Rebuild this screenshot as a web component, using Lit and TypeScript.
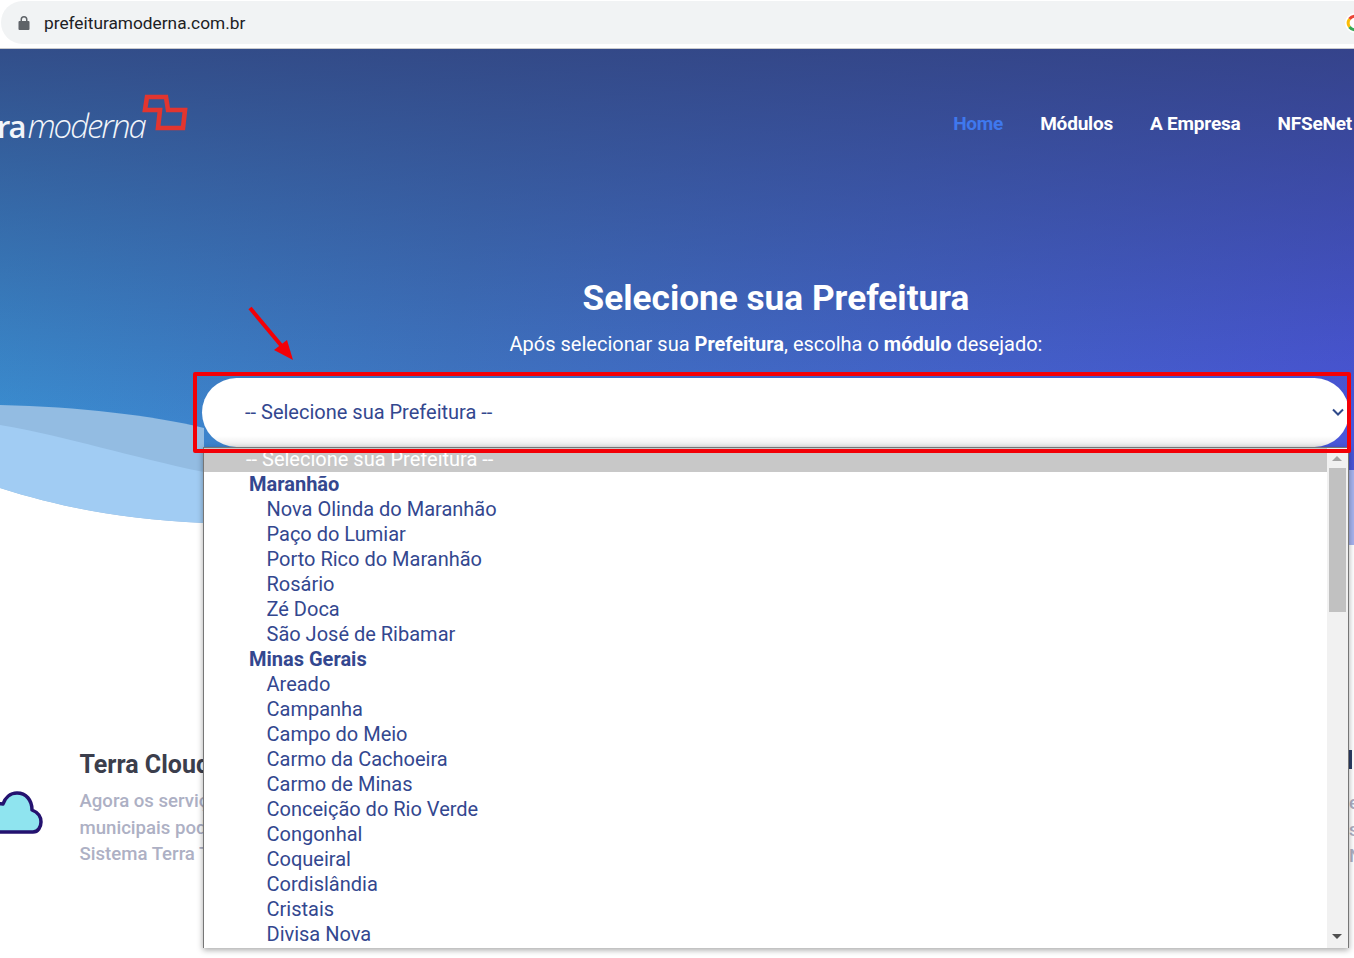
import { LitElement, html, css } from "lit";
import { customElement } from "lit/decorators.js";

type Row = { t: string; k: "sel" | "group" | "opt" };
const g = (t: string): Row => ({ t, k: "group" });
const o = (t: string): Row => ({ t, k: "opt" });
const ROWS: Row[] = [
  { t: "-- Selecione sua Prefeitura --", k: "sel" },
  g("Maranhão"),
  ...["Nova Olinda do Maranhão", "Paço do Lumiar", "Porto Rico do Maranhão", "Rosário", "Zé Doca", "São José de Ribamar"].map(o),
  g("Minas Gerais"),
  ...["Areado", "Campanha", "Campo do Meio", "Carmo da Cachoeira", "Carmo de Minas", "Conceição do Rio Verde", "Congonhal", "Coqueiral", "Cordislândia", "Cristais", "Divisa Nova"].map(o),
];

@customElement("app-root")
export class AppRoot extends LitElement {
  static styles = css`
    :host { display: block; position: relative; width: 1354px; height: 958px; overflow: hidden; background: #fff; font-family: Roboto, "Liberation Sans", sans-serif; }
    .chrome { height: 49px; box-sizing: border-box; padding: 1px 0 4px; background: #fff; border-bottom: 1px solid #c8c9cc; }
    .omni { height: 43px; display: flex; align-items: center; background: #f1f3f4; border-radius: 22px 0 0 22px; margin-left: 1px; padding-left: 17px; }
    .lock { width: 12px; height: 14px; margin-right: 14px; }
    .url { font: 17.300px Roboto, sans-serif; color: #202124; flex: 1; }
    .gicon { width: 20px; height: 20px; margin-right: -11px; }
    .hero { position: relative; height: 496px; overflow: hidden; background: linear-gradient(100deg, #3a90d2 0%, #3f78c6 35%, #4a55da 100%); }
    .hero::before { content: ""; position: absolute; inset: 0; background: linear-gradient(180deg, rgba(48,62,120,.8) 0%, rgba(48,62,120,0) 75%); }
    .wave { position: absolute; left: 0; top: 0; width: 1354px; height: 496px; }
    .nav { position: relative; height: 227px; display: flex; align-items: flex-start; }
    .logo { display: flex; align-items: flex-start; margin-left: -3px; width: 190px; padding-top: 55px; flex: none; }
    .wordmark { font: 300 italic 33px "Open Sans", sans-serif; color: #f2f5fa; letter-spacing: -2px; line-height: 44px; white-space: nowrap; }
    .wordmark b { font-weight: 600; font-style: normal; font-size: 31px; margin-right: 3px; }
    .mark { width: 50px; height: 45px; margin-left: -5px; margin-top: -14px; flex: none; }
    .menu { display: flex; gap: 37px; margin-left: auto; margin-right: 2px; padding-top: 64px; font: 700 19px/22px Roboto, sans-serif; color: #fff; letter-spacing: -.2px; white-space: nowrap; }
    .menu .on { color: #3f78ee; }
    .head { position: relative; text-align: center; color: #fff; width: 1104px; margin-left: 224px; }
    h1 { margin: 0; font: 700 35.200px/44px Roboto, sans-serif; }
    .sub { margin: 12px 0 0; font: 400 20px/24px Roboto, sans-serif; }
    .selectbox { position: relative; margin: 22px 5px 0 202px; height: 69px; border-radius: 35px; background: linear-gradient(180deg, #fff 84%, #e9e9e9 100%); display: flex; align-items: center; padding: 0 0 2px 43px; box-sizing: border-box; color: #33478f; font: 400 20px Roboto, sans-serif; }
    .selectbox svg { position: absolute; right: 5px; top: 30px; width: 12px; height: 9px; }
    .features { position: relative; height: 413px; padding: 0 0 0 79.500px; }
    .features h3 { margin: 0; padding-top: 205px; font: 700 25px/30px Roboto, sans-serif; color: #3b3e4c; white-space: nowrap; }
    .features p { margin: 8px 0 0; font: 500 18.600px/26.500px Roboto, sans-serif; color: #adb0c4; white-space: pre; }
    .cloud { position: absolute; left: 0; top: 235px; width: 50px; height: 60px; }
    .peek { position: absolute; left: 1349px; top: 205px; width: 12px; }
    .peek i { display: block; width: 3px; height: 19px; background: #2e3f68; margin-bottom: 21px; }
    .peek span { display: block; font: 500 18.600px/26.500px Roboto, sans-serif; color: #adb0c4; }
    .list { position: absolute; left: 203px; top: 447px; width: 1146px; height: 501px; box-sizing: border-box; background: #fff; border: 1px solid #767676; border-width: 1px 1px 0 1px; box-shadow: 0 2px 6px rgba(0,0,0,.35); display: flex; overflow: hidden; }
    .items { flex: 1; min-width: 0; overflow: hidden; color: #33478f; font: 400 20px/25px Roboto, sans-serif; margin-top: -1px; }
    .row { height: 25px; white-space: nowrap; }
    .row.sel { background: #c8c8c8; color: #fff; padding-left: 42px; }
    .row.group { font-weight: 700; padding-left: 45px; }
    .row.opt { padding-left: 62.500px; }
    .sbar { width: 21px; background: #f1f1f1; position: relative; flex: none; }
    .thumb { position: absolute; left: 2px; right: 2px; top: 20px; height: 144px; background: #c1c1c1; }
    .arrow-up, .arrow-down { position: absolute; left: 5px; width: 0; height: 0; border-left: 5px solid transparent; border-right: 5px solid transparent; }
    .arrow-up { top: 8px; border-bottom: 5px solid #a3a3a3; }
    .arrow-down { bottom: 9px; border-top: 5px solid #505050; }
    .callout { position: absolute; left: 193px; top: 372px; width: 1158px; height: 81px; box-sizing: border-box; border: 4.500px solid #f30006; border-radius: 2px; pointer-events: none; }
    .pointer { position: absolute; left: 245px; top: 303px; width: 54px; height: 60px; }
  `;

  render() {
    return html`
      <div class="chrome">
        <div class="omni">
          <svg class="lock" viewBox="0 0 12 14"><path fill="#5f6368" d="M2.500 5V3.600a3.500 3.500 0 0 1 7 0V5H10.500a1 1 0 0 1 1 1v7a1 1 0 0 1-1 1h-9a1 1 0 0 1-1-1V6a1 1 0 0 1 1-1zM4 5h4V3.600a2 2 0 0 0-4 0z"/></svg>
          <span class="url">prefeituramoderna.com.br</span>
          <svg class="gicon" viewBox="0 0 20 20" fill="none" stroke-width="3">
            <circle cx="10" cy="10" r="10" fill="#fff" stroke="none"/>
            <path stroke="#ea4335" d="M4.500 6A7 7 0 0 1 16 6.500"/>
            <path stroke="#fbbc05" d="M4.500 6A7 7 0 0 0 4.500 14"/>
            <path stroke="#34a853" d="M4.500 14A7 7 0 0 0 16 13.500"/>
          </svg>
        </div>
      </div>
      <section class="hero">
        <svg class="wave" viewBox="0 0 1354 496" preserveAspectRatio="none">
          <path fill="#93bce2" d="M0 356C80 358 150 366 204 379V430H0z"/>
          <path fill="#a1ccf3" d="M0 376C70 388 130 408 204 423V474C120 470 60 458 0 439z"/>
          <path fill="#fff" d="M0 439C60 458 120 470 204 474V496H0z"/>
          <path fill="#a6b3ee" d="M1349 421H1354V496H1349z"/>
        </svg>
        <div class="nav">
          <div class="logo">
            <span class="wordmark"><b>ra</b>moderna</span>
            <svg class="mark" viewBox="140 90 50 45" fill="none" stroke="#e2352f" stroke-width="4.600" stroke-linejoin="miter">
              <path d="M185 110H168L166 97H147L145 110H160L158 128H183z"/>
            </svg>
          </div>
          <nav class="menu"><span class="on">Home</span><span>Módulos</span><span>A Empresa</span><span>NFSeNet</span></nav>
        </div>
        <div class="head">
          <h1>Selecione sua Prefeitura</h1>
          <p class="sub">Após selecionar sua <b>Prefeitura</b>, escolha o <b>módulo</b> desejado:</p>
        </div>
        <div class="selectbox">-- Selecione sua Prefeitura --
          <svg viewBox="0 0 12 9" fill="none" stroke="#2f4a8a" stroke-width="2"><path d="M1 1.500L6 6.500L11 1.500"/></svg>
        </div>
      </section>
      <section class="features">
        <svg class="cloud" viewBox="0 780 50 60">
          <path fill="#8fe4ef" stroke="#24126f" stroke-width="3.500" stroke-linejoin="round" d="M-10 832H33C38 832 41 827 41 822C41 816 37 812 32 810C32 800 26 793 17 793C10 793 5 798 3 804C-2 803 -8 806 -10 810z"/>
        </svg>
        <h3>Terra Cloud</h3>
        <p>Agora os serviços
municipais podem
Sistema Terra Tributos</p>
        <div class="peek"><i></i><span>e</span><span>s</span><span>N</span></div>
      </section>
      <div class="list">
        <div class="items">
          ${ROWS.map((r) => html`<div class="row ${r.k}">${r.t}</div>`)}
        </div>
        <div class="sbar"><span class="arrow-up"></span><div class="thumb"></div><span class="arrow-down"></span></div>
      </div>
      <div class="callout"></div>
      <svg class="pointer" viewBox="0 0 54 60"><path stroke="#f30006" stroke-width="4" d="M5 5L40 47"/><path fill="#f30006" d="M48 57L42 37L29 47z"/></svg>
    `;
  }
}
